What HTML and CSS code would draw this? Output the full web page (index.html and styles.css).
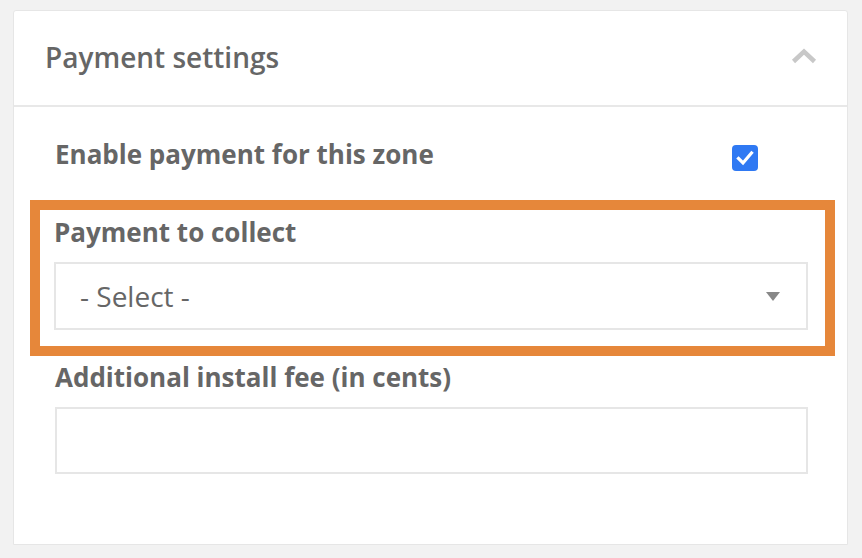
FILE: index.html
```html
<!DOCTYPE html>
<html>
<head>
<meta charset="utf-8">
<link rel="stylesheet" href="styles.css">
</head>
<body>
<div class="card">
  <div class="card-header">
    <span class="title">Payment settings</span>
    <svg class="chevron" width="26" height="16" viewBox="0 0 26 16"><path d="M2.5 13.5 L13 3.5 L23.5 13.5" fill="none" stroke="#c8c8c8" stroke-width="4.5"/></svg>
  </div>
  <div class="card-body">
    <div class="row check-row">
      <span class="label">Enable payment for this zone</span>
      <span class="checkbox"><svg width="26" height="26" viewBox="0 0 26 26"><path d="M6.5 13.5 L11 18 L19.5 8" fill="none" stroke="#fff" stroke-width="3.2" stroke-linecap="square"/></svg></span>
    </div>
    <div class="highlight">
      <div class="label">Payment to collect</div>
      <div class="select"><span>- Select -</span><span class="caret"></span></div>
    </div>
    <div class="row field-row">
      <div class="label">Additional install fee (in cents)</div>
      <div class="input"></div>
    </div>
  </div>
</div>
</body>
</html>
```
FILE: styles.css
```css
html, body { margin: 0; padding: 0; }
body {
  background: #f2f2f2;
  font-family: "Open Sans", "Liberation Sans", sans-serif;
  color: #666;
  padding: 10px 14px 0 13px;
  height: 558px;
  box-sizing: border-box;
}
.card {
  background: #fff;
  border: 1px solid #e6e6e6;
  border-radius: 3px 3px 0 0;
  height: 535px;
  box-sizing: border-box;
}
.card-header {
  height: 96px;
  box-sizing: border-box;
  border-bottom: 2px solid #e8e8e8;
  display: flex;
  align-items: center;
  justify-content: space-between;
  padding: 0 30px 0 31px;
}
.title {
  font-size: 28px;
  font-weight: 600;
  color: #666;
  margin-top: -2px;
}
.chevron { display: block; margin-top: -4px; }
.card-body {
  padding: 29px 12px 0 16px;
}
.label {
  font-size: 26px;
  font-weight: 700;
  color: #666;
  line-height: 34px;
}
.check-row {
  display: flex;
  align-items: center;
  justify-content: space-between;
  padding: 0 77px 0 25px;
  height: 35px;
}
.checkbox {
  width: 26px;
  height: 26px;
  background: #2f79f3;
  border-radius: 4px;
  display: block;
  margin-top: 9px;
}
.checkbox svg { display: block; }
.highlight {
  margin-top: 29px;
  border: 10px solid #e6873a;
  padding: 5px 17px 16px 14px;
}
.select, .input {
  border: 2px solid #e6e6e6;
  height: 68px;
  box-sizing: border-box;
  margin-top: 13px;
}
.input { height: 67px; }
.select {
  display: flex;
  align-items: center;
  justify-content: space-between;
  padding: 0 26px 0 24px;
  font-size: 28px;
  color: #666;
}
.caret {
  width: 0;
  height: 0;
  border-left: 7px solid transparent;
  border-right: 7px solid transparent;
  border-top: 9px solid #888;
}
.field-row {
  padding: 4px 27px 0 25px;
}
```
